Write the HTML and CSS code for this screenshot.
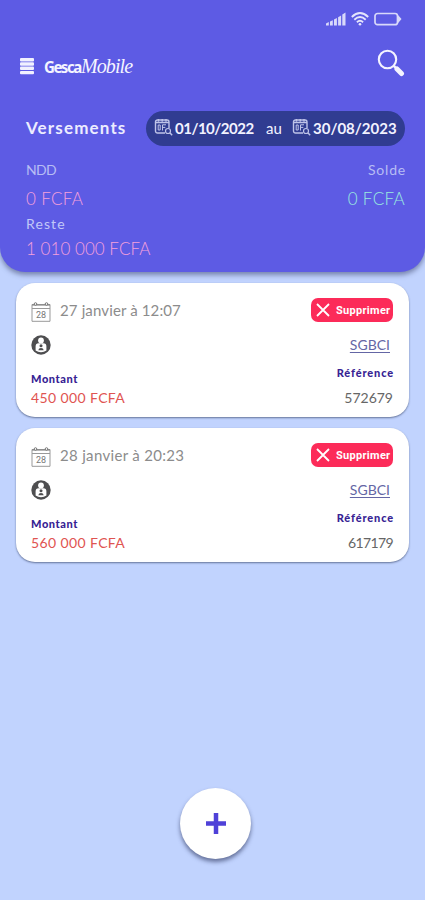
FILE: index.html
```html
<!DOCTYPE html>
<html lang="fr">
<head>
<meta charset="utf-8">
<title>GescaMobile</title>
<link rel="stylesheet" href="styles.css">
</head>
<body>
<svg class="defs" width="0" height="0">
  <symbol id="search-date" viewBox="0 0 19 18">
    <g fill="none" stroke="currentColor">
      <path d="M11 15H3.500a2 2 0 0 1-2-2V4a2 2 0 0 1 2-2h9.500a2 2 0 0 1 2 2v6" stroke-width="1.400"/>
      <path d="M2 4.500h13M4.500 1v2.500M8.200 1v2.500M12 1v2.500" stroke-width="1.400"/>
      <path d="M4.200 7h2v5h-2zM8.500 12.500V6.800h3.500M8.500 9.400h2.800" stroke-width="1"/>
      <circle cx="14" cy="13" r="2.500" stroke-width="1.200"/>
      <path d="M15.800 14.800l2.400 2.400" stroke-width="1.500"/>
    </g>
  </symbol>
  <symbol id="calendar" viewBox="0 0 20 20">
    <path d="M1 2.500h18v16.800H1zM1 6.500h18" fill="none" stroke="#999"/>
    <path d="M1 3h18" stroke="#888" stroke-width="1.200"/>
    <circle cx="4.500" cy="2" r="1.300" fill="#fff" stroke="#777"/><circle cx="15.500" cy="2" r="1.300" fill="#fff" stroke="#777"/>
    <text x="10" y="16.300" text-anchor="middle" font-size="9" fill="#777" font-family="Roboto, sans-serif">28</text>
  </symbol>
  <symbol id="person" viewBox="0 0 20 20">
    <circle cx="10" cy="10" r="9.700" fill="#4e4e50"/>
    <circle cx="10" cy="5.400" r="2.900" fill="#fff"/>
    <path d="M4.600 15.500v-4q0-3.200 3-3.200h4.800q3 0 3 3.200v4q-2.400 1.800-5.400 1.800t-5.400-1.800z" fill="#fff"/>
    <circle cx="10" cy="10.800" r="1.500" fill="#4e4e50"/><path d="M7.300 15.200q.3-2.300 2.700-2.300t2.700 2.300z" fill="#4e4e50"/>
  </symbol>
</svg>
<header class="header">
  <div class="status">
    <svg width="20" height="14" viewBox="0 0 20 14" fill="#d9d9fa"><path d="M0 11.500L2.800 10v3.500H0zM4 9.500l2.800-1.300v5.300H4zM8 7.500l2.900-1.500v7.500H8zM12.100 5.200l3-1.600v9.900h-3zM16.300 2.600l3.200-2v12.900h-3.200z"/></svg>
    <svg width="18" height="14" viewBox="0 0 18 14" fill="none" stroke="#e4e4fc" stroke-width="1.900"><path d="M.8 5Q9-2.800 17.200 5M3.300 7.700Q9 2.400 14.700 7.700M5.900 10.200Q9 7.500 12.100 10.200"/><circle cx="9" cy="12.300" r="1.300" fill="#e4e4fc" stroke="none"/></svg>
    <svg width="28" height="14" viewBox="0 0 28 14" fill="none" stroke="#d9d9fa" stroke-width="1.700"><rect x="1" y="1.500" width="22.500" height="11.200" rx="2.500"/><path d="M23.500 2.500l4 4.600-4 4.600z" fill="#d9d9fa" stroke="none"/></svg>
  </div>
  <nav class="nav">
    <svg class="menu" width="14" height="17" viewBox="0 0 14 17" fill="#f1f1ff"><rect width="14" height="3.400" rx="1"/><rect y="4.300" width="14" height="3.400" rx="1"/><rect y="8.600" width="14" height="3.400" rx="1"/><rect y="12.900" width="14" height="3.400" rx="1"/></svg>
    <span class="brand">Gesca</span><span class="script">Mobile</span>
    <svg class="search" width="28" height="28" viewBox="0 0 28 28" fill="none" stroke="#f4f4ff"><circle cx="10.500" cy="10.500" r="8.700" stroke-width="2.100"/><path d="M16.800 16.800l3 3" stroke-width="2.500"/><path d="M20 20l4.500 4.500" stroke-width="5" stroke-linecap="round"/></svg>
  </nav>
  <div class="title-row">
    <h1>Versements</h1>
    <div class="range">
      <svg width="19" height="18"><use href="#search-date"/></svg>
      <span class="date from">01/10/2022</span>
      <span class="date au">au</span>
      <svg width="19" height="18"><use href="#search-date"/></svg>
      <span class="date to">30/08/2023</span>
    </div>
  </div>
  <div class="line label"><span class="ndd">NDD</span><span class="solde">Solde</span></div>
  <div class="line amount"><span>0 FCFA</span><span class="green">0 FCFA</span></div>
  <div class="line small"><span class="reste">Reste</span></div>
  <div class="line total"><span>1 010 000 FCFA</span></div>
</header>
<main>
  <article class="card">
    <div class="top"><svg width="20" height="20"><use href="#calendar"/></svg><time class="t1">27 janvier à 12:07</time>
      <button><svg width="14" height="14" viewBox="0 0 14 14" stroke="#fff" stroke-width="1.800"><path d="M1 1l12 12M13 1L1 13"/></svg>Supprimer</button></div>
    <div class="mid"><svg width="20" height="20"><use href="#person"/></svg><a>SGBCI</a></div>
    <div class="bottom"><div><h2 class="mt">Montant</h2><p class="money">450 000 FCFA</p></div><div class="right"><h2 class="ref">Référence</h2><p class="r1">572679</p></div></div>
  </article>
  <article class="card">
    <div class="top"><svg width="20" height="20"><use href="#calendar"/></svg><time class="t2">28 janvier à 20:23</time>
      <button><svg width="14" height="14" viewBox="0 0 14 14" stroke="#fff" stroke-width="1.800"><path d="M1 1l12 12M13 1L1 13"/></svg>Supprimer</button></div>
    <div class="mid"><svg width="20" height="20"><use href="#person"/></svg><a>SGBCI</a></div>
    <div class="bottom"><div><h2 class="mt">Montant</h2><p class="money">560 000 FCFA</p></div><div class="right"><h2 class="ref">Référence</h2><p class="r2">617179</p></div></div>
  </article>
</main>
<div class="add"><svg width="20" height="21" viewBox="0 0 20 21"><path d="M10 0v21M0 10.500h20" stroke="#4f41d8" stroke-width="4.500"/></svg></div>
</body>
</html>
```
FILE: styles.css
```css
* { box-sizing: border-box; margin: 0; padding: 0; }
body { height: 900px; overflow: hidden; background: #c1d3fe; font-family: Lato, sans-serif; display: flex; flex-direction: column; }
.defs { display: none; }
svg { flex: none; display: block; }
span, time, h1, h2, p, a { white-space: nowrap; }
.header { flex: none; height: 272px; padding: 12px 20px 0 26px; background: #5d5be4; border-radius: 0 0 25px 25px; box-shadow: 0 3px 5px rgba(60, 70, 110, .55); }
.status { height: 14px; display: flex; justify-content: flex-end; gap: 5px; margin-right: 3px; }
.nav { height: 32px; margin: 24px 0 0 -6px; display: flex; align-items: center; color: #f4f4ff; }
.brand { margin: 1px 0 0 10px; font: 700 16px/24px "Noto Sans", sans-serif; letter-spacing: -1.6px; width: 37px; transform: scaleX(.94); transform-origin: left; }
.script { font: italic 20px/24px "Liberation Serif", serif; letter-spacing: -.9px; margin-top: -1px; }
.search { margin: -6px 0 0 auto; }
.title-row { display: flex; justify-content: space-between; margin-top: 28px; height: 36px; align-items: center; }
h1 { font-size: 17px; font-weight: 700; letter-spacing: 1.15px; color: #ececff; margin-top: -2px; }
.range { width: 259px; height: 35px; border-radius: 18px; background: #303c91; color: #f2f2ff; display: flex; align-items: center; padding-left: 8px; font-size: 15px; }
.range svg { color: #bfc4e9; margin-top: -2px; }
.date { font-weight: 700; }
.from { width: 80px; margin-left: 2px; letter-spacing: -.5px; }
.au { width: 17px; margin: 0 9px 0 11px; font-weight: 400; }
.to { margin-left: 2px; }
.line { display: flex; justify-content: space-between; align-items: center; }
.label { height: 28px; margin-top: 9px; font-size: 14px; color: #b7bdf4; }
.ndd { letter-spacing: -.7px; }
.solde { letter-spacing: .8px; margin-right: -1px; }
.amount { height: 30px; font-size: 17px; font-weight: 300; color: #f5a0dc; letter-spacing: .35px; }
.green { color: #9aebe0; }
.small { height: 20px; font-size: 14px; color: #c2c8f8; }
.reste { letter-spacing: 1.1px; }
.total { height: 28px; font-size: 17px; font-weight: 300; color: #f5a0dc; letter-spacing: .05px; margin-top: 1px; }
main { padding: 11px 16px; display: flex; flex-direction: column; gap: 11px; }
.card { height: 134px; background: #fff; border-radius: 19px; padding: 14px 16px 0 15px; box-shadow: 0 1px 2px rgba(50, 65, 100, .65); }
.top { height: 26px; display: flex; align-items: center; color: #8c8c8c; }
.top > svg { margin-top: 4px; }
time { margin-left: 9px; font-size: 15px; letter-spacing: .13px; }
.t2 { letter-spacing: .32px; }
button { margin-left: auto; border: 0; width: 82px; height: 24px; border-radius: 7px; background: #fc2b59; color: #fff; display: flex; align-items: center; gap: 6px; padding-left: 5px; font: 700 11px Roboto, sans-serif; letter-spacing: .3px; }
.mid { height: 43px; display: flex; justify-content: space-between; align-items: center; }
.mid a { color: #6466a5; text-decoration: underline; text-underline-offset: 2px; font-size: 14px; margin-right: 3px; }
.bottom { display: flex; justify-content: space-between; margin-top: 6px; }
.right { text-align: right; margin-top: -6px; }
h2 { font-size: 11px; line-height: 14px; color: #372394; font-weight: 900; }
.mt { letter-spacing: .6px; }
.ref { letter-spacing: .85px; margin-right: -1px; }
.bottom p { font-size: 14px; line-height: 24px; color: #666; }
.bottom .money { color: #df5451; letter-spacing: .38px; }
.right p { margin-top: 6px; }
.right .r2 { letter-spacing: -.6px; }
.add { width: 71px; height: 71px; border-radius: 50%; background: #fff; box-shadow: 0 3px 4px rgba(50, 60, 100, .65); display: flex; align-items: center; justify-content: center; margin: auto auto 41px 180px; }
```
